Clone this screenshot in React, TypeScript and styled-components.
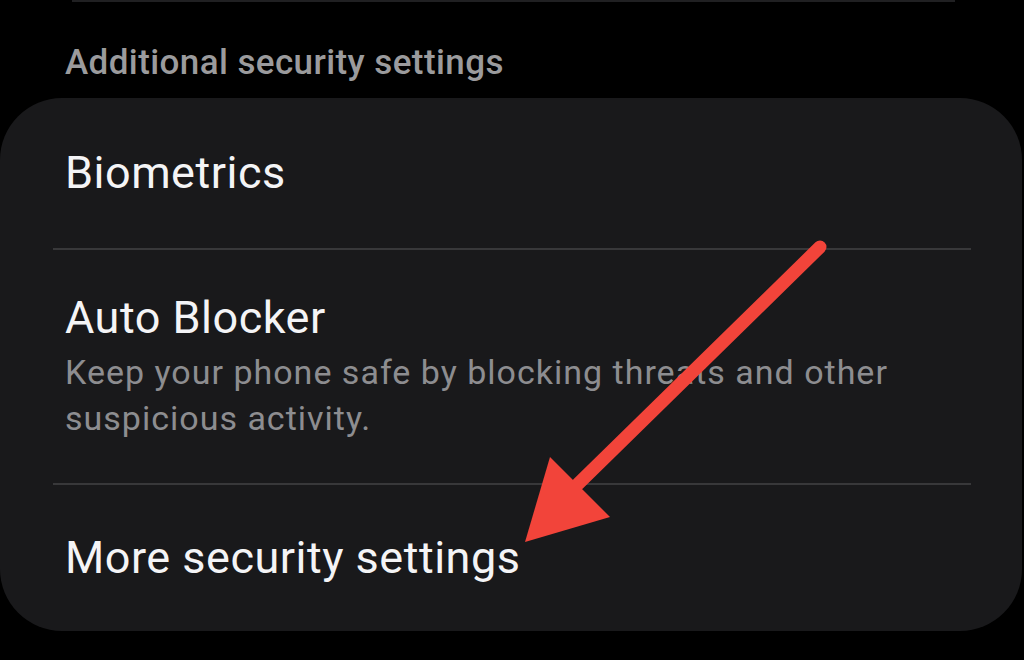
import styled, { createGlobalStyle } from "styled-components"

const Global = createGlobalStyle`
  html, body {
    margin: 0;
    padding: 0;
    background: #000;
  }
  body {
    font-family: Roboto, "Noto Sans", sans-serif;
    -webkit-font-smoothing: antialiased;
  }
`

const Screen = styled.div`
  position: relative;
  width: 1024px;
  height: 660px;
  overflow: hidden;
  background: #000;
`

const TopEdge = styled.div`
  height: 2px;
  margin: 0 69px 0 72px;
  background: #202022;
`

const SectionTitle = styled.div`
  padding: 40px 0 0 65px;
  height: 55px;
  box-sizing: border-box;
  font-size: 35px;
  font-weight: 500;
  letter-spacing: 0.4px;
  color: #9b9b9d;
  line-height: 42px;
`

const Card = styled.div`
  margin-top: 41px;
  width: 1022px;
  height: 533px;
  background: #19191b;
  border-radius: 62px;
  display: flex;
  flex-direction: column;
  overflow: hidden;
`

const Row = styled.div<{ $h: number }>`
  height: ${p => p.$h}px;
  display: flex;
  flex-direction: column;
  justify-content: center;
  padding: 0 65px;
  box-sizing: border-box;
`

const Divider = styled.div`
  height: 2px;
  margin: 0 51px 0 53px;
  background: #38383a;
  flex-shrink: 0;
`

const Title = styled.div`
  font-size: 45px;
  color: #f4f4f6;
  line-height: 52px;
  letter-spacing: 0.5px;
`

const Desc = styled.div`
  font-size: 34px;
  color: #8d8d90;
  line-height: 46px;
  letter-spacing: 1px;
  margin-top: 5px;
`

const Arrow = styled.svg`
  position: absolute;
  left: 0;
  top: 0;
  pointer-events: none;
`

export default function App() {
  return (
    <>
      <Global />
      <Screen>
        <TopEdge />
        <SectionTitle>Additional security settings</SectionTitle>
        <Card>
          <Row $h={150}>
            <Title>Biometrics</Title>
          </Row>
          <Divider />
          <Row $h={233}>
            <Title>Auto Blocker</Title>
            <Desc>
              Keep your phone safe by blocking threats and other
              <br />
              suspicious activity.
            </Desc>
          </Row>
          <Divider />
          <Row $h={146}>
            <Title>More security settings</Title>
          </Row>
        </Card>
        <Arrow width="1024" height="660" viewBox="0 0 1024 660">
          <line x1="820" y1="247" x2="578" y2="484" stroke="#f2443a" strokeWidth="13" strokeLinecap="round" />
          <polygon points="550,457 610,517 525,542" fill="#f2443a" />
        </Arrow>
      </Screen>
    </>
  )
}
